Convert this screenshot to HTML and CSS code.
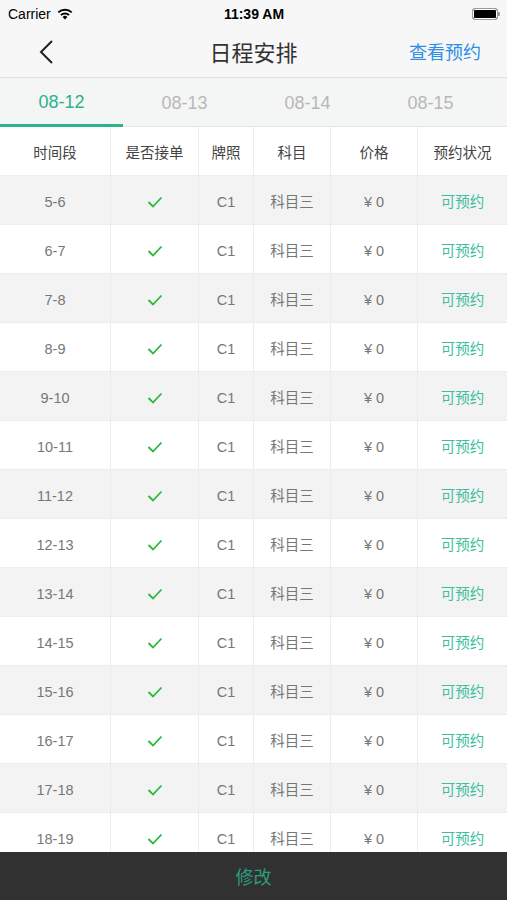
FILE: index.html
```html
<!DOCTYPE html>
<html lang="zh">
<head>
  <meta charset="UTF-8" />
  <meta name="viewport" content="width=device-width, initial-scale=1.0"/>
  <title>日程安排</title>
  <link rel="stylesheet" href="styles.css">
</head>
<body>
  <div class="app">
    <div class="statusbar">
      <div class="carrier">Carrier
        <svg class="wifi" width="16" height="12" viewBox="0 0 16 12">
          <path d="M8 11.5 L5.6 8.9 A3.4 3.4 0 0 1 10.4 8.9 Z" fill="#000"/>
          <path d="M3.9 7.1 A5.9 5.9 0 0 1 12.1 7.1" stroke="#000" stroke-width="1.9" fill="none"/>
          <path d="M1.3 4.4 A9.6 9.6 0 0 1 14.7 4.4" stroke="#000" stroke-width="1.9" fill="none"/>
        </svg>
      </div>
      <div class="clock">11:39 AM</div>
      <div class="battery"><span class="battery-fill"></span><span class="battery-tip"></span></div>
    </div>

    <div class="navbar">
      <div class="back">
        <svg width="16" height="26" viewBox="0 0 16 26">
          <path d="M14 2 L3 13 L14 24" stroke="#222" stroke-width="2" fill="none"/>
        </svg>
      </div>
      <div class="title">日程安排</div>
      <div class="nav-link">查看预约</div>
    </div>

    <div class="tabs">
      <div class="tab active">08-12</div>
      <div class="tab">08-13</div>
      <div class="tab">08-14</div>
      <div class="tab">08-15</div>
    </div>

    <div class="table-wrap">
      <div class="row head">
        <div>时间段</div><div>是否接单</div><div>牌照</div><div>科目</div><div>价格</div><div>预约状况</div>
      </div>
      <div id="rows"></div>
    </div>

    <div class="footer">修改</div>
  </div>

  <script>
    const rows = document.getElementById("rows");
    const check = '<svg width="18" height="14" viewBox="0 0 18 14"><path d="M2.5 7 L7 11.5 L15.5 2.5" stroke="#2cb83a" stroke-width="1.8" fill="none"/></svg>';
    for (let h = 5; h < 19; h++) {
      const row = document.createElement("div");
      row.className = "row" + ((h - 5) % 2 === 0 ? " odd" : "");
      row.innerHTML =
        `<div class="num">${h}-${h + 1}</div><div class="num">${check}</div><div class="num">C1</div>` +
        `<div>科目三</div><div class="num">¥ 0</div><div class="status">可预约</div>`;
      rows.appendChild(row);
    }
  </script>
</body>
</html>
```

FILE: styles.css
```css
* { box-sizing: border-box; margin: 0; padding: 0; }
body {
  font-family: "Liberation Sans", "Noto Sans CJK SC", sans-serif;
  background-color: #fff;
  color: #333;
}
.app {
  height: 900px;
  display: flex;
  flex-direction: column;
  overflow: hidden;
}
.statusbar {
  height: 28px;
  display: flex;
  align-items: center;
  justify-content: space-between;
  padding: 0 7px 0 8px;
  background-color: #f7f7f7;
  font-size: 14px;
  color: #000;
}
.carrier {
  width: 110px;
  display: flex;
  align-items: center;
  gap: 6px;
}
.clock {
  font-weight: bold;
}
.battery {
  width: 110px;
  display: flex;
  justify-content: flex-end;
  align-items: center;
}
.battery-fill {
  width: 26px;
  height: 12px;
  border: 1px solid #999;
  border-radius: 3px;
  background-color: #000;
  box-shadow: inset 0 0 0 1px #fff;
}
.battery-tip {
  width: 2px;
  height: 4px;
  background-color: #999;
  border-radius: 0 1px 1px 0;
}
.navbar {
  height: 50px;
  display: flex;
  align-items: center;
  justify-content: space-between;
  padding: 0 26px 4px 38px;
  background-color: #f7f7f7;
  border-bottom: 1px solid #e2e2e2;
}
.back {
  width: 80px;
  display: flex;
  align-items: center;
  padding-top: 2px;
}
.title {
  font-size: 22px;
  color: #333;
  margin-right: 12px;
}
.nav-link {
  width: 80px;
  text-align: right;
  font-size: 18px;
  color: #2e8ee6;
}
.tabs {
  height: 49px;
  display: flex;
  background-color: #f4f5f5;
  border-bottom: 1px solid #e6e6e6;
}
.tab {
  width: 123px;
  display: flex;
  align-items: center;
  justify-content: center;
  font-size: 18px;
  color: #b8b8b8;
  padding-top: 2px;
}
.tab.active {
  color: #2bb28e;
  border-bottom: 3px solid #2bb28e;
  margin-bottom: -1px;
}
.table-wrap {
  flex: 1;
  overflow: hidden;
}
.row {
  height: 49px;
  display: grid;
  grid-template-columns: 111px 88px 55px 77px 87px 89px;
  border-bottom: 1px solid #ececec;
  font-size: 14.5px;
  color: #777;
}
.row > div {
  display: flex;
  align-items: center;
  justify-content: center;
  border-right: 1px solid #ececec;
}
.row > div.num {
  padding-top: 3px;
}
.row > div:last-child {
  border-right: none;
}
.row.head {
  color: #444;
  background-color: #fff;
}
.row.odd {
  background-color: #f3f3f3;
}
.status {
  color: #3cbf9c;
}
.footer {
  height: 48px;
  display: flex;
  align-items: center;
  justify-content: center;
  background-color: #313131;
  color: #2a9e7f;
  font-size: 18px;
}
```
